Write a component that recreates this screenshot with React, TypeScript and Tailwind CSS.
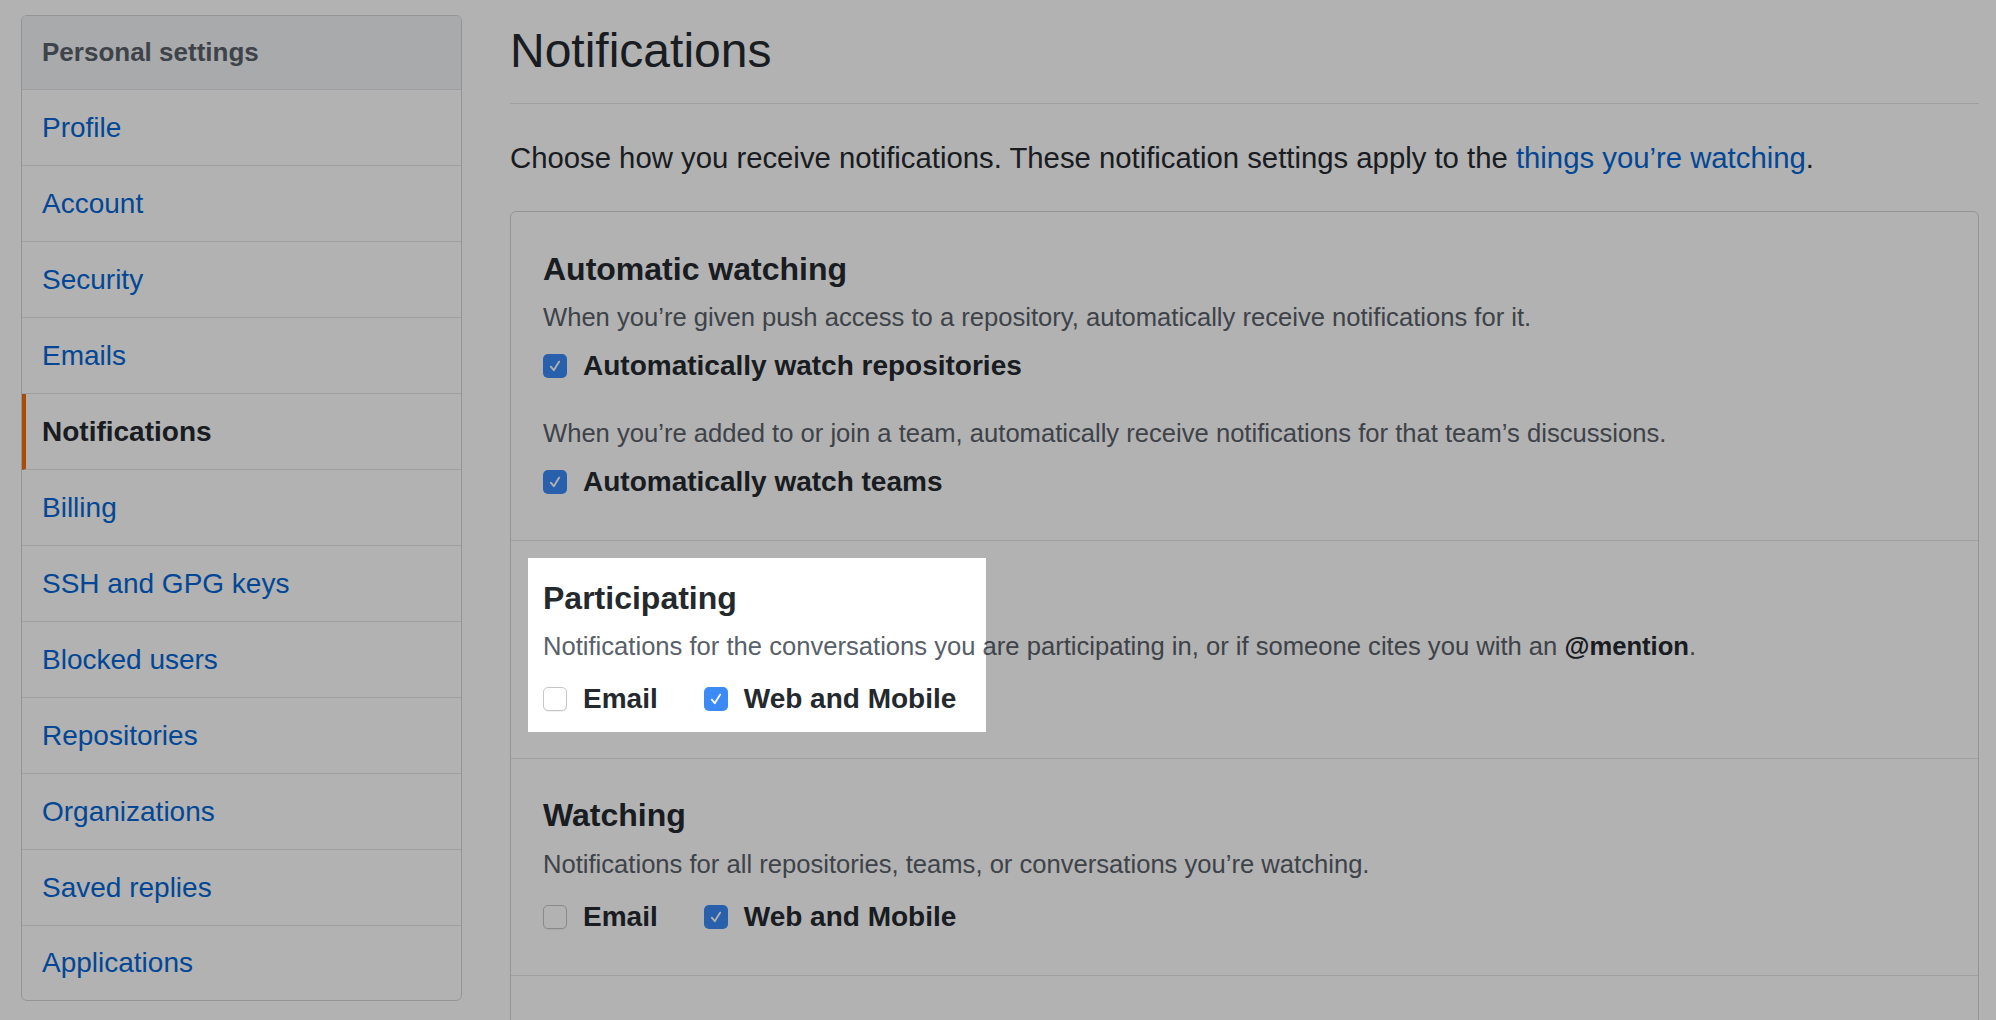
import React from "react";

const items = [
  "Profile",
  "Account",
  "Security",
  "Emails",
  "Notifications",
  "Billing",
  "SSH and GPG keys",
  "Blocked users",
  "Repositories",
  "Organizations",
  "Saved replies",
  "Applications",
];

function Check({ checked }: { checked: boolean }) {
  if (checked) {
    return (
      <span className="flex h-[24px] w-[24px] shrink-0 items-center justify-center rounded-[5px] bg-[#3b8af6]">
        <svg width="18" height="18" viewBox="0 0 18 18">
          <path
            d="M4.8 9.6 L7.8 13.2 L13.2 4.6"
            fill="none"
            stroke="white"
            strokeWidth="1.8"
            strokeLinecap="round"
            strokeLinejoin="round"
          />
        </svg>
      </span>
    );
  }
  return (
    <span className="h-[24px] w-[24px] shrink-0 rounded-[5px] border border-[#c6c6c6] bg-white shadow-[0_1px_1px_rgba(0,0,0,0.06)]" />
  );
}

function Opt({ checked, label }: { checked: boolean; label: string }) {
  return (
    <span className="flex items-center gap-[16px]">
      <Check checked={checked} />
      <span className="text-[28px] font-bold leading-[36px] text-[#24292e]">{label}</span>
    </span>
  );
}

export default function App() {
  return (
    <div
      className="relative flex h-[1020px] w-[1996px] overflow-hidden bg-white"
      style={{ fontFamily: '"Liberation Sans", Arial, sans-serif' }}
    >
      {/* Sidebar */}
      <nav className="ml-[21px] mt-[15px] h-fit w-[441px] shrink-0 overflow-hidden rounded-[6px] border border-[#d1d5da]">
        <div className="flex h-[74px] items-center border-b border-[#e1e4e8] bg-[#f3f4f6] px-[20px] text-[26px] font-bold text-[#586069]">
          Personal settings
        </div>
        {items.map((it, i) => {
          const selected = it === "Notifications";
          const last = i === items.length - 1;
          return (
            <div
              key={it}
              className={
                selected
                  ? "flex h-[76px] items-center border-b border-l-4 border-[#e1e4e8] border-l-[#f66a0a] pl-[16px] text-[28px] font-bold text-[#24292e]"
                  : last
                  ? "flex h-[74px] items-center px-[20px] text-[28px] text-[#0366d6]"
                  : "flex h-[76px] items-center border-b border-[#e1e4e8] px-[20px] text-[28px] text-[#0366d6]"
              }
            >
              {it}
            </div>
          );
        })}
      </nav>

      {/* Main */}
      <main className="ml-[48px] mr-[17px] flex min-w-0 flex-1 flex-col">
        <div className="border-b border-[#e1e4e8] pb-[22px] pt-[21px]">
          <h1 className="text-[48px] font-normal leading-[60px] text-[#24292e]">Notifications</h1>
        </div>
        <p className="mt-[34px] text-[29.3px] leading-[40px] text-[#24292e]">
          Choose how you receive notifications. These notification settings apply to the{" "}
          <span className="text-[#0366d6]">things you’re watching</span>.
        </p>

        <div className="mt-[33px] rounded-[6px] border border-[#d1d5da]">
          {/* Automatic watching */}
          <section className="border-b border-[#e1e4e8] px-[32px] pb-[40px] pt-[37px]">
            <h2 className="text-[32px] font-bold leading-[40px] text-[#24292e]">Automatic watching</h2>
            <p className="mt-[10px] text-[25.6px] leading-[36px] text-[#586069]">
              When you’re given push access to a repository, automatically receive notifications for it.
            </p>
            <div className="mt-[13px] flex">
              <Opt checked label="Automatically watch repositories" />
            </div>
            <p className="mt-[31px] text-[25.6px] leading-[36px] text-[#586069]">
              When you’re added to or join a team, automatically receive notifications for that team’s discussions.
            </p>
            <div className="mt-[13px] flex">
              <Opt checked label="Automatically watch teams" />
            </div>
          </section>

          {/* Participating */}
          <section className="relative border-b border-[#e1e4e8] px-[32px] pb-[41px] pt-[37px]">
            <div className="pointer-events-none absolute left-[17px] top-[17px] z-10 h-[174px] w-[458px] shadow-[0_0_0_4000px_rgba(0,0,0,0.3)]" />
            <h2 className="text-[32px] font-bold leading-[40px] text-[#24292e]">Participating</h2>
            <p className="mt-[10px] text-[25.6px] leading-[36px] text-[#586069]">
              Notifications for the conversations you are participating in, or if someone cites you with an{" "}
              <span className="font-bold text-[#24292e]">@mention</span>.
            </p>
            <div className="mt-[17px] flex gap-[46px]">
              <Opt checked={false} label="Email" />
              <Opt checked label="Web and Mobile" />
            </div>
          </section>

          {/* Watching */}
          <section className="border-b border-[#e1e4e8] px-[32px] pb-[40px] pt-[36px]">
            <h2 className="text-[32px] font-bold leading-[40px] text-[#24292e]">Watching</h2>
            <p className="mt-[11px] text-[25.6px] leading-[36px] text-[#586069]">
              Notifications for all repositories, teams, or conversations you’re watching.
            </p>
            <div className="mt-[17px] flex gap-[46px]">
              <Opt checked={false} label="Email" />
              <Opt checked label="Web and Mobile" />
            </div>
          </section>

          <section className="h-[200px] px-[32px]" />
        </div>
      </main>
    </div>
  );
}
